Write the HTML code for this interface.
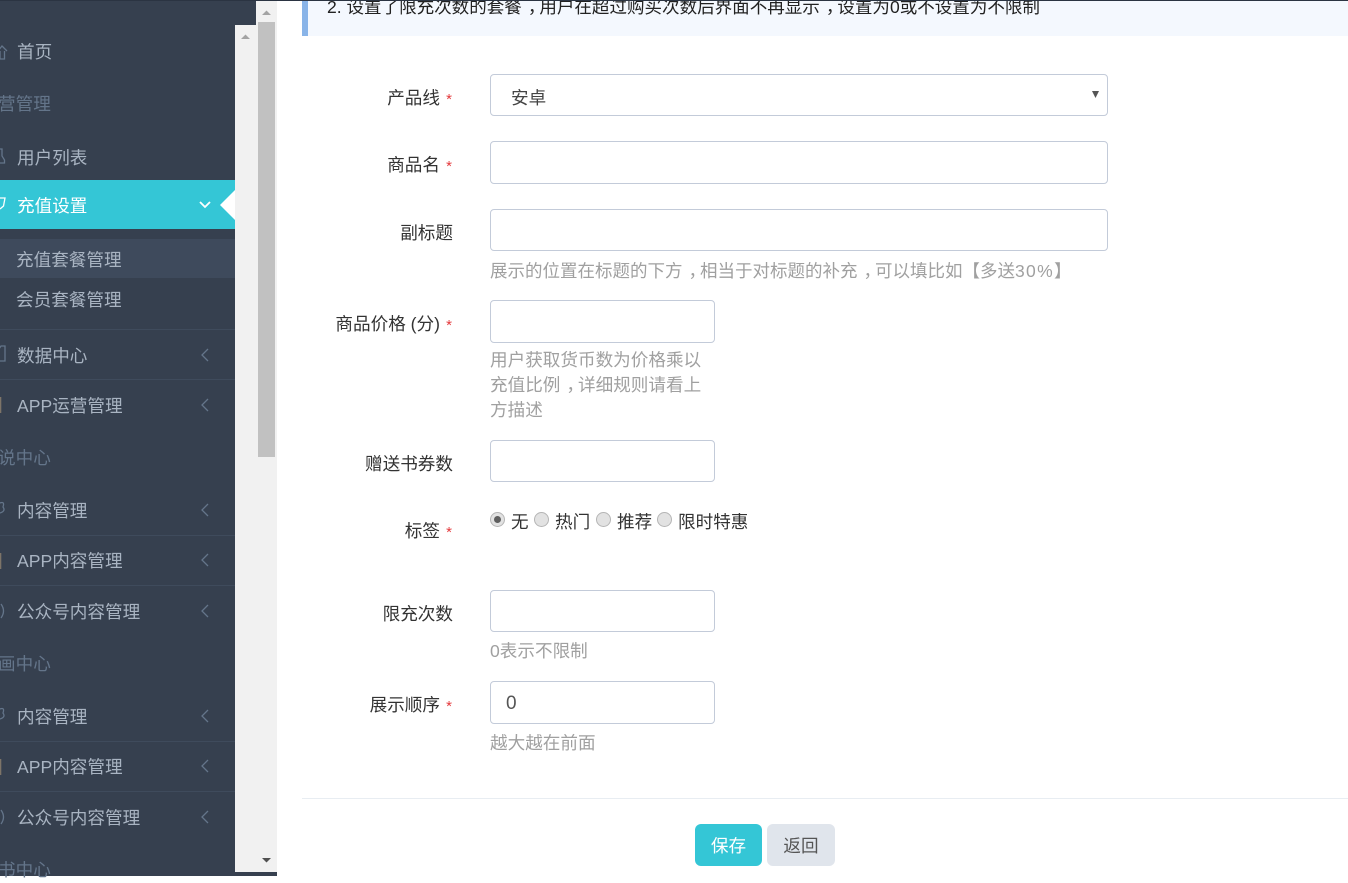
<!DOCTYPE html>
<html><head><meta charset="utf-8"><style>
html,body{margin:0;padding:0;width:1348px;height:876px;overflow:hidden;background:#fff;font-family:"Liberation Sans","Noto Sans CJK SC",sans-serif;font-size:17.6px}
.a{position:absolute;white-space:nowrap;line-height:26px}
.box{position:absolute;box-sizing:border-box;border:1px solid #c3cbd9;border-radius:4px;background:#fff}
.m{color:#a9b4c2;left:17px}
.h{color:#64758a;left:-2px}
.l{color:#333;text-align:right;right:896px;margin-top:1px}
.l i{font-style:normal;color:#e4393c;margin-left:2px;font-size:15px}
.n{right:894px;padding-right:1px}
.t{color:#a0a0a0}
.c{position:relative;left:6px}
.d{position:absolute;left:0;width:235px;height:1px;background:#3f4b5c}
.r{position:absolute;box-sizing:border-box;width:15px;height:15px;border-radius:50%;border:1px solid #b5b5b5;background:#e2e2e2}
svg{position:absolute}
</style></head><body>
<div style="position:absolute;left:0;top:0;width:1348px;height:1px;background:#2b3442;z-index:5"></div>
<div style="position:absolute;left:0;top:0;width:256px;height:25px;background:#36404f"></div>
<div style="position:absolute;left:0;top:0;width:235px;height:876px;background:#36404f"></div>
<div style="position:absolute;left:235px;top:872px;width:42px;height:4px;background:#36404f"></div>
<div style="position:absolute;left:235px;top:25px;width:21px;height:847px;background:#f1f1f1"></div>
<div style="position:absolute;left:256px;top:1px;width:21px;height:871px;background:#f1f1f1"></div>
<div style="position:absolute;left:258px;top:22px;width:17px;height:435px;background:#c1c1c1"></div>
<svg style="left:0;top:0" width="277" height="876"><path d="M262 15L266.500 10.500L271 15Z M241 39L245.500 34.500L250 39Z" fill="#a3a3a3"/><path d="M262 858L266.500 862.500L271 858Z" fill="#505050"/></svg>

<div style="position:absolute;left:0;top:180px;width:235px;height:49px;background:#34c6d6"></div>
<svg style="left:219px;top:190px" width="16" height="30"><path d="M16 0L1 15L16 30Z" fill="#fff"/></svg>
<svg style="left:198px;top:199px" width="14" height="12"><path d="M2 3L7 8L12 3" fill="none" stroke="#fff" stroke-width="1.800"/></svg>
<div style="position:absolute;left:0;top:239px;width:235px;height:39px;background:#3e4a5c"></div>

<div class="d" style="top:329px"></div><div class="d" style="top:379px"></div>
<div class="d" style="top:535px"></div><div class="d" style="top:585px"></div>
<div class="d" style="top:741px"></div><div class="d" style="top:791px"></div>

<div class="a m" style="top:39px">首页</div>
<div class="a h" style="top:91px">营管理</div>
<div class="a m" style="top:145px">用户列表</div>
<div class="a" style="left:17px;top:193px;color:#fff">充值设置</div>
<div class="a m" style="left:16px;top:247px">充值套餐管理</div>
<div class="a m" style="left:16px;top:287px">会员套餐管理</div>
<div class="a m" style="top:343px">数据中心</div>
<div class="a m" style="top:393px">APP运营管理</div>
<div class="a h" style="top:445px">说中心</div>
<div class="a m" style="top:498px">内容管理</div>
<div class="a m" style="top:548px">APP内容管理</div>
<div class="a m" style="top:599px">公众号内容管理</div>
<div class="a h" style="top:651px">画中心</div>
<div class="a m" style="top:704px">内容管理</div>
<div class="a m" style="top:754px">APP内容管理</div>
<div class="a m" style="top:805px">公众号内容管理</div>
<div class="a h" style="top:857px">书中心</div>

<svg style="left:0;top:0" width="235" height="876" fill="none" stroke="#64758a" stroke-width="1.300">
<path d="M208 349L202 355L208 361M208 399L202 405L208 411M208 504L202 510L208 516M208 554L202 560L208 566M208 605L202 611L208 617M208 710L202 716L208 722M208 760L202 766L208 772M208 811L202 817L208 823"/>
<path d="M-2 51L2 46L7 51M0 51V59H4.500V51"/>
<path d="M0 149H2V156L4.500 160V163H-1"/>
<path d="M0 198H5L3.500 206L0 209" stroke="#fff"/>
<path d="M-1 349L1 346H5V361H-1"/>
<path d="M0.500 397V413M0.500 553V569M0.500 759V775" stroke="#7d7468" stroke-width="1.600"/>
<path d="M0 503Q5 501 3 507Q6 511 0 513M0 709Q5 707 3 713Q6 717 0 719"/>
<path d="M1 604Q6 611 1 618M1 810Q6 817 1 824"/>
</svg>

<div style="position:absolute;left:302px;top:0;width:1046px;height:36px;background:#f4f8fe"></div>
<div style="position:absolute;left:302px;top:0;width:6px;height:36px;background:#89b4e8"></div>
<div class="a" style="left:327px;top:-6px;color:#222;font-size:17.55px">2. 设置了限充次数的套餐<span class="c">，</span>用户在超过购买次数后界面不再显示<span class="c">，</span>设置为0或不设置为不限制</div>

<div class="a l" style="top:84px">产品线<i> *</i></div>
<div class="box" style="left:490px;top:74px;width:618px;height:42px"></div>
<div class="a" style="left:511px;top:85px;color:#444">安卓</div>
<svg style="left:1090px;top:90px" width="12" height="12"><path d="M2 1H9L5.500 8Z" fill="#555"/></svg>

<div class="a l" style="top:151px">商品名<i> *</i></div>
<div class="box" style="left:490px;top:141px;width:618px;height:43px"></div>

<div class="a l n" style="top:219px">副标题</div>
<div class="box" style="left:490px;top:209px;width:618px;height:42px"></div>
<div class="a t" style="left:490px;top:258px;font-size:17.5px">展示的位置在标题的下方<span class="c">，</span>相当于对标题的补充<span class="c">，</span>可以填比如【多送<span style="letter-spacing:1.300px">30%</span>】</div>

<div class="a l" style="top:310px">商品价格 (分)<i> *</i></div>
<div class="box" style="left:490px;top:300px;width:225px;height:43px"></div>
<div class="a t" style="left:490px;top:348px;line-height:25px">用户获取货币数为价格乘以<br>充值比例<span class="c">，</span>详细规则请看上<br>方描述</div>

<div class="a l n" style="top:450px">赠送书券数</div>
<div class="box" style="left:490px;top:440px;width:225px;height:42px"></div>

<div class="a l" style="top:517px">标签<i> *</i></div>
<div class="r" style="left:490px;top:512px"></div>
<div style="position:absolute;left:494px;top:516px;width:7px;height:7px;border-radius:50%;background:#5f5f5f"></div>
<div class="a" style="left:511px;top:509px;color:#333">无</div>
<div class="r" style="left:534px;top:512px"></div>
<div class="a" style="left:555px;top:509px;color:#333">热门</div>
<div class="r" style="left:596px;top:512px"></div>
<div class="a" style="left:617px;top:509px;color:#333">推荐</div>
<div class="r" style="left:657px;top:512px"></div>
<div class="a" style="left:678px;top:509px;color:#333">限时特惠</div>

<div class="a l n" style="top:600px">限充次数</div>
<div class="box" style="left:490px;top:590px;width:225px;height:42px"></div>
<div class="a t" style="left:490px;top:638px">0表示不限制</div>

<div class="a l" style="top:691px">展示顺序<i> *</i></div>
<div class="box" style="left:490px;top:681px;width:225px;height:43px"></div>
<div class="a" style="left:506px;top:691px;color:#555;font-size:19px">0</div>
<div class="a t" style="left:490px;top:730px">越大越在前面</div>

<div style="position:absolute;left:302px;top:798px;width:1046px;height:1px;background:#e8edf2"></div>
<div style="position:absolute;left:695px;top:824px;width:67px;height:42px;border-radius:6px;background:#34c6d6;color:#fff;text-align:center;line-height:44px">保存</div>
<div style="position:absolute;left:767px;top:824px;width:68px;height:42px;border-radius:6px;background:#e0e5ec;color:#555;text-align:center;line-height:44px">返回</div>
</body></html>
